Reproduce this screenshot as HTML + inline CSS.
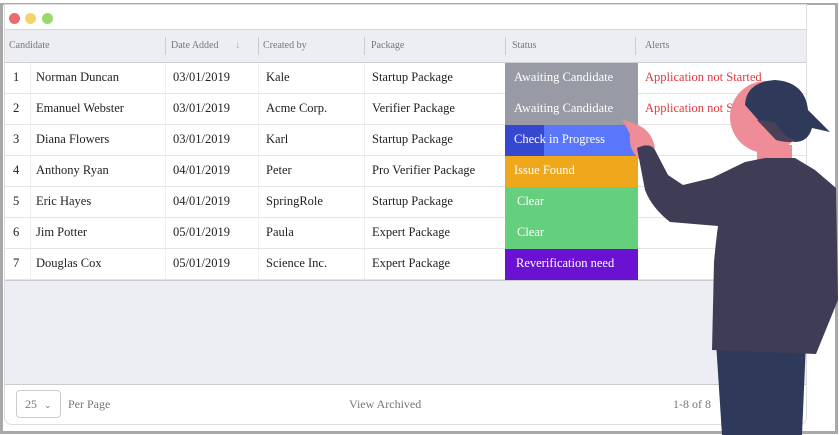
<!DOCTYPE html>
<html><head><style>
*{margin:0;padding:0;box-sizing:border-box}
body{width:839px;height:435px;background:#fff;position:relative;overflow:hidden;font-family:"Liberation Serif",serif}
.frame{position:absolute;left:0;top:3px;width:838px;height:431px;border:3px solid #a8a8a8;border-top-width:2px}
.card{position:absolute;left:4px;top:4px;width:803px;height:421px;border:1px solid #ddd;border-radius:0 0 8px 8px;background:#fff;overflow:hidden}
.dot{position:absolute;top:8px;width:11px;height:11px;border-radius:50%}
.hdr{position:absolute;left:0;top:24px;width:803px;height:34px;background:#edeef3;border-top:1px solid #d8d8d8;border-bottom:1px solid #cfcfcf}
.hdr span{position:absolute;top:10px;font-size:10px;color:#777}
.hdr i{position:absolute;top:7px;width:1px;height:18px;background:#ccc}
.row{position:absolute;left:0;width:803px;height:31px;border-bottom:1px solid #e4e4e4;font-size:12.5px;color:#222}
.row span{position:absolute;top:7px}
.row b{font-weight:normal;position:absolute;left:500px;top:0;width:133px;height:31px;color:#fff;padding:7px 0 0 9px}
.vl{position:absolute;top:58px;height:217px;width:1px;background:#eee}
.gray{position:absolute;left:0;top:275px;width:803px;height:105px;background:#edeef3;border-top:1px solid #ccc;border-bottom:1px solid #ccc}
.ft{position:absolute;font-size:12px;color:#777}
</style></head><body>
<div class="frame"></div>
<div class="card">
<div class="dot" style="left:4px;background:#ec6a6d"></div>
<div class="dot" style="left:20px;background:#f6d365"></div>
<div class="dot" style="left:37px;background:#9bd96a"></div>
<div class="hdr">
<span style="left:4px">Candidate</span>
<i style="left:160px"></i><span style="left:166px">Date Added <span style="position:static;margin-left:14px;color:#aaa">↓</span></span>
<i style="left:253px"></i><span style="left:258px">Created by</span>
<i style="left:359px"></i><span style="left:366px">Package</span>
<i style="left:500px"></i><span style="left:507px">Status</span>
<i style="left:630px"></i><span style="left:640px">Alerts</span>
</div>
<div class="vl" style="left:25px"></div><div class="vl" style="left:160px"></div><div class="vl" style="left:253px"></div><div class="vl" style="left:359px"></div>
<div class="row" style="top:58px"><span style="left:8px">1</span><span style="left:31px">Norman Duncan</span><span style="left:168px">03/01/2019</span><span style="left:261px">Kale</span><span style="left:367px">Startup Package</span><b style="background:#989ba5">Awaiting Candidate</b><span style="left:640px;color:#e0393e">Application not Started</span></div>
<div class="row" style="top:89px"><span style="left:8px">2</span><span style="left:31px">Emanuel Webster</span><span style="left:168px">03/01/2019</span><span style="left:261px">Acme Corp.</span><span style="left:367px">Verifier Package</span><b style="background:#989ba5">Awaiting Candidate</b><span style="left:640px;color:#e0393e">Application not Started</span></div>
<div class="row" style="top:120px"><span style="left:8px">3</span><span style="left:31px">Diana Flowers</span><span style="left:168px">03/01/2019</span><span style="left:261px">Karl</span><span style="left:367px">Startup Package</span><b style="background:linear-gradient(90deg,#3548cf 39px,#5a76fa 39px)">Check in Progress</b></div>
<div class="row" style="top:151px"><span style="left:8px">4</span><span style="left:31px">Anthony Ryan</span><span style="left:168px">04/01/2019</span><span style="left:261px">Peter</span><span style="left:367px">Pro Verifier Package</span><b style="background:#efa81c">Issue Found</b></div>
<div class="row" style="top:182px"><span style="left:8px">5</span><span style="left:31px">Eric Hayes</span><span style="left:168px">04/01/2019</span><span style="left:261px">SpringRole</span><span style="left:367px">Startup Package</span><b style="background:#64d07e;padding-left:12px">Clear</b></div>
<div class="row" style="top:213px"><span style="left:8px">6</span><span style="left:31px">Jim Potter</span><span style="left:168px">05/01/2019</span><span style="left:261px">Paula</span><span style="left:367px">Expert Package</span><b style="background:#64d07e;padding-left:12px">Clear</b></div>
<div class="row" style="top:244px"><span style="left:8px">7</span><span style="left:31px">Douglas Cox</span><span style="left:168px">05/01/2019</span><span style="left:261px">Science Inc.</span><span style="left:367px">Expert Package</span><b style="background:#6b12d2;padding-left:11px">Reverification need</b></div>
<div class="gray"></div>
<div style="position:absolute;left:11px;top:385px;width:45px;height:28px;border:1px solid #ccc;border-radius:4px;font-size:12px;color:#777;padding:6px 0 0 8px">25 <span style="font-size:9px;margin-left:4px">⌄</span></div>
<div class="ft" style="left:63px;top:392px">Per Page</div>
<div class="ft" style="left:344px;top:392px">View Archived</div>
<div class="ft" style="left:668px;top:392px">1-8 of 8</div>
</div>
<svg width="839" height="435" style="position:absolute;left:0;top:0">
<path d="M716 342 L806 342 L802 435 L722 435 Z" fill="#2f3a5a"/>
<path d="M757 145 L792 145 L792 165 L757 165 Z" fill="#ee8d98"/>
<circle cx="766" cy="117" r="36" fill="#ee8d98"/>
<path d="M745 105 Q746 82 775 80 Q805 82 808 110 L830 132 L812 128 Q808 142 795 142 Q780 140 776 125 L760 122 Z" fill="#2f3a5a"/>
<path d="M757 120 L775 122 Q785 140 798 140 Q790 144 776 140 Z" fill="#4a4058"/>
<path d="M622 119 L640 126 Q652 132 655 148 L640 160 Q628 150 630 134 Z" fill="#ee8d98"/>
<path d="M637 148 Q650 142 655 150 L668 175 L683 185 L712 178 L745 162 L765 158 L795 158 L815 170 L836 188 L838 300 L816 354 L712 350 L714 262 Q716 240 718 226 L670 222 Q652 208 645 190 Z" fill="#3f3d56"/>
</svg>
</body></html>
